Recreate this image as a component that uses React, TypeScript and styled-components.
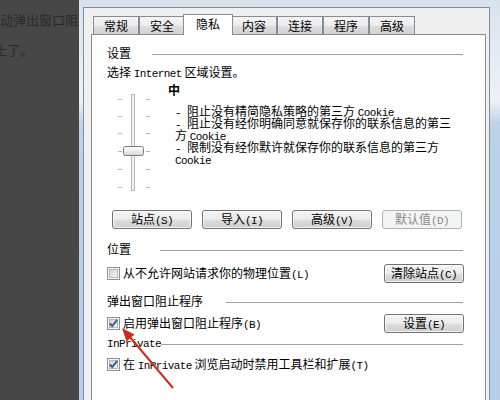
import React from "react";
import styled, { createGlobalStyle } from "styled-components";

const CJK = `"Noto Sans CJK SC", "Noto Sans", sans-serif`;

const GlobalStyle = createGlobalStyle`
  html, body {
    margin: 0;
    padding: 0;
  }
  body {
    width: 500px;
    height: 400px;
    overflow: hidden;
    background: #474747;
  }
`;

const Screen = styled.div`
  position: relative;
  display: flex;
  width: 500px;
  height: 400px;
  overflow: hidden;
  font-family: ${CJK};
  font-size: 12px;
  color: #000;
`;

const Backdrop = styled.div`
  width: 79px;
  flex: none;
  overflow: hidden;
  background: #474747;
  padding-top: 5px;
  color: #2b2b2b;
  font-size: 13px;
  line-height: 30px;
  white-space: nowrap;
`;

const BackdropLine = styled.div<{ $shift: number }>`
  margin-left: ${(p) => p.$shift}px;
`;

const Window = styled.div`
  flex: 1;
  display: flex;
  flex-direction: column;
  padding: 7px 10px 0 4px;
  background: linear-gradient(
    to bottom,
    #d9e2ec 0,
    #eef2f7 100px,
    #bcd2e9 124px,
    #b6cee8 100%
  );
`;

const Client = styled.div`
  flex: 1;
  display: flex;
  flex-direction: column;
  border: 1px solid #7d8ea6;
  border-bottom: none;
  background: #f0f0f0;
  padding: 6px 3px 0 7px;
`;

const TabStrip = styled.div`
  position: relative;
  z-index: 1;
  display: flex;
  align-items: flex-end;
  height: 21px;
  padding-left: 2px;
  margin-bottom: -1px;
`;

const Tab = styled.div<{ $active?: boolean }>`
  position: relative;
  z-index: ${(p) => (p.$active ? 2 : 1)};
  box-sizing: border-box;
  display: flex;
  align-items: center;
  height: ${(p) => (p.$active ? 21 : 18)}px;
  margin: ${(p) => (p.$active ? "0 -2px" : "0 0 1px")};
  padding: ${(p) => (p.$active ? "0 12px 2px" : "1px 10px 0")};
  border: 1px solid #898c95;
  border-bottom: none;
  background: ${(p) =>
    p.$active
      ? "#fff"
      : "linear-gradient(#f4f4f4 0, #ececec 50%, #dedede 51%, #d2d2d2 100%)"};
  line-height: 16px;
`;

const Panel = styled.div`
  flex: 1;
  display: flex;
  flex-direction: column;
  background: #fff;
  border: 1px solid #898c95;
  border-bottom: none;
  padding: 10px 21px 0 15px;
`;

const GroupHeader = styled.div<{ $gap: number; $top: number }>`
  display: flex;
  align-items: center;
  height: 16px;
  line-height: 16px;
  margin-top: ${(p) => p.$top}px;
  white-space: nowrap;

  &::after {
    content: "";
    flex: 1;
    height: 1px;
    margin: 3px 1px 0 ${(p) => p.$gap}px;
    background: #a0a0a0;
    box-shadow: 0 1px 0 #fff;
  }
`;

const Line = styled.div<{ $top?: number }>`
  height: 16px;
  line-height: 16px;
  margin-top: ${(p) => p.$top ?? 0}px;
  white-space: nowrap;
`;

// SimSun-like half-width Latin: 6px advance
const Latin = styled.span`
  font-family: "Liberation Mono", "DejaVu Sans Mono", monospace;
  font-size: 11px;
  letter-spacing: -0.6px;
`;

const LevelRow = styled.div`
  display: flex;
  margin-top: 2px;
`;

const SliderArt = styled.svg`
  flex: none;
  margin-top: 2px;
`;

const LevelText = styled.div`
  margin-left: 7px;
`;

const LevelName = styled.div`
  font-weight: bold;
  height: 16px;
  line-height: 16px;
  margin-bottom: 7px;
`;

const LevelLines = styled.div`
  padding-left: 7px;
  white-space: nowrap;
`;

const DescLine = styled.div`
  height: 12px;
  line-height: 12px;
`;

const ButtonRow = styled.div`
  display: flex;
  gap: 10px;
  padding-left: 5px;
  margin-top: 16px;
`;

const Button = styled.button`
  box-sizing: border-box;
  display: block;
  width: 80px;
  height: 19px;
  padding: 0;
  border: 1px solid #707070;
  border-radius: 3px;
  background: linear-gradient(#f3f3f3 0, #ebebeb 50%, #dddddd 51%, #cfcfcf 100%);
  box-shadow: inset 0 0 0 1px rgba(255, 255, 255, 0.7);
  font-family: ${CJK};
  font-size: 12px;
  line-height: 16px;
  text-align: center;
  white-space: nowrap;
  color: #000;

  &:disabled {
    border-color: #adb2b5;
    background: #f4f4f4;
    box-shadow: none;
    color: #8a8a8a;
  }
`;

const OptionRow = styled.div<{ $top: number }>`
  display: flex;
  align-items: center;
  justify-content: space-between;
  height: 19px;
  margin-top: ${(p) => p.$top}px;
`;

const CheckLabel = styled.label`
  display: flex;
  align-items: center;
  gap: 3px;
  white-space: nowrap;
`;

const LabelText = styled.span`
  line-height: 16px;
`;

const Box = styled.svg`
  flex: none;
`;

const Annotation = styled.svg`
  position: absolute;
  left: 110px;
  top: 318px;
  pointer-events: none;
`;

const Checkbox = ({ checked }: { checked?: boolean }) => (
  <Box width="13" height="13" viewBox="0 0 13 13">
    <defs>
      <linearGradient id="cbfill" x1="0" y1="0" x2="1" y2="1">
        <stop offset="0" stopColor="#cbcfd5" />
        <stop offset="1" stopColor="#f7f7f7" />
      </linearGradient>
    </defs>
    <rect x="0.5" y="0.5" width="12" height="12" fill="#f6f6f6" stroke="#8e8f8f" />
    <rect x="2.5" y="2.5" width="8" height="8" fill="url(#cbfill)" stroke="#b4b8be" />
    {checked && (
      <path
        d="M2.8 6.3 L5.2 9 L10.2 2.8"
        fill="none"
        stroke="#3b5690"
        strokeWidth="1.9"
      />
    )}
  </Box>
);

const ticks = [15, 32, 49, 67, 85, 103];

const PrivacySlider = () => (
  <SliderArt width="54" height="110" viewBox="0 0 54 110">
    <defs>
      <linearGradient id="thumb" x1="0" y1="0" x2="0" y2="1">
        <stop offset="0" stopColor="#fdfdfd" />
        <stop offset="0.5" stopColor="#ececec" />
        <stop offset="1" stopColor="#d4d4d4" />
      </linearGradient>
    </defs>
    {ticks.map((y) => (
      <g key={y} stroke="#b5b5b5" strokeWidth="1">
        <line x1="11" y1={y + 0.5} x2="15" y2={y + 0.5} />
        <line x1="39" y1={y + 0.5} x2="43" y2={y + 0.5} />
      </g>
    ))}
    <rect x="24.5" y="10.5" width="3" height="96" fill="#f2f2f2" stroke="#b8b8b8" />
    <rect
      x="16.5"
      y="62.5"
      width="20"
      height="9"
      rx="2"
      fill="url(#thumb)"
      stroke="#7c7c7c"
    />
  </SliderArt>
);

const tabs = ["常规", "安全", "隐私", "内容", "连接", "程序", "高级"];

export default function App() {
  return (
    <>
      <GlobalStyle />
      <Screen>
        <Backdrop>
          <BackdropLine $shift={0}>动弹出窗口阻止</BackdropLine>
          <BackdropLine $shift={-6}>止了。</BackdropLine>
        </Backdrop>
        <Window>
          <Client>
            <TabStrip>
              {tabs.map((t) => (
                <Tab key={t} $active={t === "隐私"}>
                  {t}
                </Tab>
              ))}
            </TabStrip>
            <Panel>
              <GroupHeader $gap={21} $top={0}>
                设置
              </GroupHeader>
              <Line $top={3}>
                选择 <Latin>Internet</Latin> 区域设置。
              </Line>
              <LevelRow>
                <PrivacySlider />
                <LevelText>
                  <LevelName>中</LevelName>
                  <LevelLines>
                    <DescLine>
                      <Latin>- </Latin>阻止没有精简隐私策略的第三方 <Latin>Cookie</Latin>
                    </DescLine>
                    <DescLine>
                      <Latin>- </Latin>阻止没有经你明确同意就保存你的联系信息的第三
                    </DescLine>
                    <DescLine>
                      方 <Latin>Cookie</Latin>
                    </DescLine>
                    <DescLine>
                      <Latin>- </Latin>限制没有经你默许就保存你的联系信息的第三方
                    </DescLine>
                    <DescLine>
                      <Latin>Cookie</Latin>
                    </DescLine>
                  </LevelLines>
                </LevelText>
              </LevelRow>
              <ButtonRow>
                <Button>
                  站点<Latin>(S)</Latin>
                </Button>
                <Button>
                  导入<Latin>(I)</Latin>
                </Button>
                <Button>
                  高级<Latin>(V)</Latin>
                </Button>
                <Button disabled>
                  默认值<Latin>(D)</Latin>
                </Button>
              </ButtonRow>

              <GroupHeader $gap={29} $top={12}>
                位置
              </GroupHeader>
              <OptionRow $top={7}>
                <CheckLabel>
                  <Checkbox />
                  <LabelText>
                    从不允许网站请求你的物理位置<Latin>(L)</Latin>
                  </LabelText>
                </CheckLabel>
                <Button>
                  清除站点<Latin>(C)</Latin>
                </Button>
              </OptionRow>

              <GroupHeader $gap={23} $top={10}>
                弹出窗口阻止程序
              </GroupHeader>
              <OptionRow $top={5}>
                <CheckLabel>
                  <Checkbox checked />
                  <LabelText>
                    启用弹出窗口阻止程序<Latin>(B)</Latin>
                  </LabelText>
                </CheckLabel>
                <Button>
                  设置<Latin>(E)</Latin>
                </Button>
              </OptionRow>

              <GroupHeader $gap={0} $top={2}>
                <LabelText>
                  <Latin>InPrivate</Latin>
                </LabelText>
              </GroupHeader>
              <OptionRow $top={4}>
                <CheckLabel>
                  <Checkbox checked />
                  <LabelText>
                    在 <Latin>InPrivate</Latin> 浏览启动时禁用工具栏和扩展
                    <Latin>(T)</Latin>
                  </LabelText>
                </CheckLabel>
              </OptionRow>
            </Panel>
          </Client>
        </Window>

        <Annotation width="70" height="75" viewBox="0 0 70 75">
          <line x1="19" y1="18" x2="63" y2="70" stroke="#cf2b22" strokeWidth="2" />
          <polygon points="12,10 24.5,16.5 16.5,23.5" fill="#cf2b22" />
        </Annotation>
      </Screen>
    </>
  );
}
